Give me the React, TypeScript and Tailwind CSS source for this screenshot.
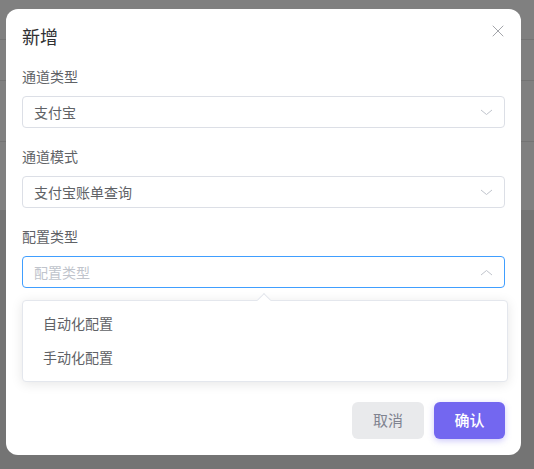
import { X } from 'lucide-react';

const font = { fontFamily: '"Noto Sans CJK SC", "Noto Sans", sans-serif' };

function Chevron({ up }: { up?: boolean }) {
  return (
    <svg width="13" height="7" viewBox="0 0 13 7" fill="none" className="text-[#c0c4cc]">
      <path d={up ? 'M1 6 L6.5 1.5 L12 6' : 'M1 1 L6.5 5.5 L12 1'} stroke="currentColor" strokeWidth="1" />
    </svg>
  );
}

function Field({ label, value, placeholder, open }: { label: string; value?: string; placeholder?: string; open?: boolean }) {
  return (
    <div className="mb-[18px]">
      <div className="h-[20px] leading-[20px] text-[14px] text-[#606266] mb-[10px]">{label}</div>
      <div
        className={`h-[32px] rounded-[4px] border flex items-center justify-between pl-[11px] pr-[11px] ${
          open ? 'border-[#409eff]' : 'border-[#dcdfe6]'
        }`}
      >
        <span className={`text-[14px] ${value ? 'text-[#606266]' : 'text-[#c0c4cc]'}`}>{value ?? placeholder}</span>
        <Chevron up={open} />
      </div>
    </div>
  );
}

export default function App() {
  return (
    <div className="relative h-[469px] w-[534px] overflow-hidden" style={font}>
      {/* page behind the overlay */}
      <div className="h-[210px] bg-[#808080]">
        <div className="h-[40px] border-b border-[#747474]" />
        <div className="h-[41px] border-b border-[#747474]" />
        <div className="h-[61px] border-b border-[#747474]" />
      </div>
      <div className="h-[259px] bg-[#747474]" />

      {/* dialog */}
      <div className="absolute left-[6px] top-[9px] w-[515px] h-[446px] bg-white rounded-[12px] px-[16px] pt-[14px]">
        <h2 className="text-[18px] text-[#303133] leading-[26px] h-[26px]">新增</h2>
        <X className="absolute right-[13px] top-[12px] w-[20px] h-[20px] text-[#909399]" strokeWidth={1} />
        <div className="mt-[17px]">
          <Field label="通道类型" value="支付宝" />
          <Field label="通道模式" value="支付宝账单查询" />
          <Field label="配置类型" placeholder="配置类型" open />
        </div>
        <div className="flex justify-end gap-[10px] mt-[114px]">
          <button className="w-[72px] h-[37px] rounded-[6px] bg-[#e9eaec] text-[#808390] text-[15px]">取消</button>
          <button className="w-[71px] h-[37px] rounded-[6px] bg-[#7367f0] text-white text-[15px] font-medium shadow-[0_2px_6px_rgba(115,103,240,0.35)]">
            确认
          </button>
        </div>
      </div>

      {/* dropdown popper */}
      <div className="absolute left-[22px] top-[300px] w-[486px] h-[82px] bg-white border border-[#e4e7ed] rounded-[4px] shadow-[0_2px_12px_rgba(0,0,0,0.1)] pt-[5px]">
        <div className="absolute -top-[6px] left-[236px] w-[10px] h-[10px] bg-white border-l border-t border-[#e4e7ed] rotate-45" />
        <div className="h-[34px] leading-[34px] px-[20px] text-[14px] text-[#606266]">自动化配置</div>
        <div className="h-[34px] leading-[34px] px-[20px] text-[14px] text-[#606266]">手动化配置</div>
      </div>
    </div>
  );
}
